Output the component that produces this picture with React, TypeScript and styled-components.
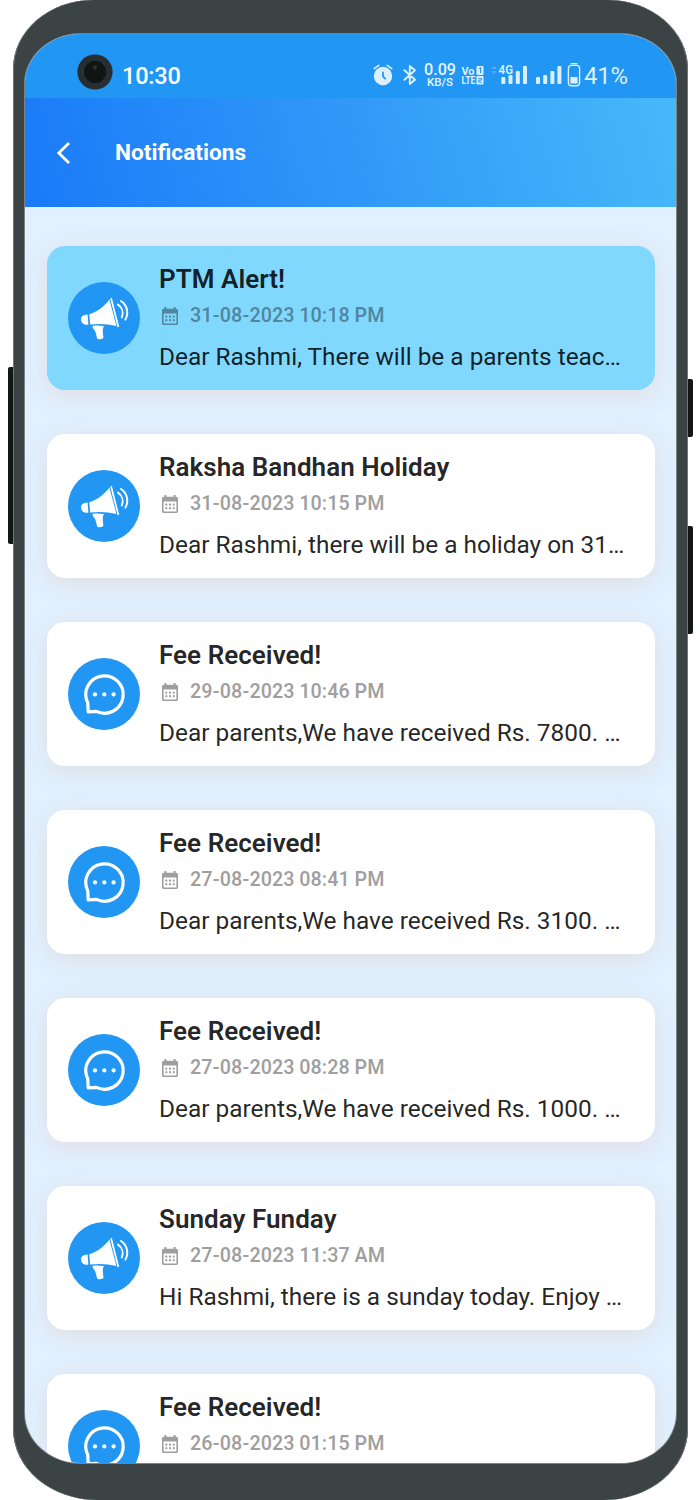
import React from "react";
import styled, { createGlobalStyle } from "styled-components";

const GlobalStyle = createGlobalStyle`
  * { box-sizing: border-box; }
  body {
    margin: 0;
    background: #ffffff;
    font-family: Roboto, "Liberation Sans", sans-serif;
  }
`;

const Stage = styled.div`
  width: 700px;
  height: 1500px;
  display: flex;
  overflow: hidden;
`;

const Rail = styled.div<{ $side: "left" | "right" }>`
  width: ${(p) => (p.$side === "left" ? 13 : 12)}px;
  flex: none;
  display: flex;
  flex-direction: column;
  align-items: ${(p) => (p.$side === "left" ? "flex-end" : "flex-start")};
`;

const SideKey = styled.div<{ $gap: number; $height: number; $side: "left" | "right" }>`
  width: 5px;
  height: ${(p) => p.$height}px;
  margin-top: ${(p) => p.$gap}px;
  background: #131716;
  border-radius: ${(p) => (p.$side === "left" ? "2px 0 0 2px" : "0 2px 2px 0")};
`;

const Phone = styled.div`
  flex: 1;
  height: 1500px;
  padding: 34px 12px 37px 12px;
  background: #3b4345;
  border-radius: 80px 80px 84px 84px / 69px 69px 71px 71px;
  box-shadow: inset 1px 0 0 0 #6f7678, inset -1px 0 0 0 #6f7678;
`;

const Screen = styled.div`
  height: 1429px;
  border-radius: 56px / 50px;
  overflow: hidden;
  background: #e1f1ff;
  box-shadow: 0 0 0 1px #7b8385;
`;

const StatusBar = styled.div`
  height: 64px;
  display: flex;
  align-items: flex-start;
  padding-left: 52px;
  background: #2196f3;
  color: #ffffff;
`;

const Camera = styled.svg`
  margin-top: 20px;
  width: 36px;
  height: 36px;
`;

const Clock = styled.div`
  width: 250px;
  margin: 27px 0 0 9px;
  font-size: 23.5px;
  line-height: 30px;
  font-weight: 500;
  letter-spacing: -0.2px;
`;

const StatusIcon = styled.svg<{ $gap?: number }>`
  flex: none;
  margin-top: 28px;
  margin-left: ${(p) => p.$gap ?? 0}px;
  color: #dcefff;
`;

const Speed = styled.div`
  width: 34px;
  margin: 29px 0 0 6px;
  text-align: center;
  font-size: 16.2px;
  line-height: 14px;
  font-weight: 500;
  color: #e8f5ff;
`;

const SpeedUnit = styled.div`
  font-size: 11.5px;
  line-height: 11px;
`;

const Percent = styled.div`
  margin: 27px 0 0 3px;
  font-size: 24px;
  line-height: 30px;
  font-weight: 450;
  letter-spacing: -0.2px;
  color: #dcefff;
`;

const AppBar = styled.header`
  height: 109px;
  display: flex;
  align-items: center;
  padding-left: 31px;
  background: linear-gradient(75deg, #1a7af8 0%, #2f97f8 48%, #47b9fa 100%);
  color: #ffffff;
`;

const PageTitle = styled.h1`
  margin: 1px 0 0 44px;
  font-size: 22.7px;
  line-height: 28px;
  font-weight: 700;
`;

const List = styled.main`
  display: flex;
  flex-direction: column;
  gap: 44px;
  padding: 39.4px 21px 0 22px;
`;

const Card = styled.article<{ $unread?: boolean }>`
  height: 144px;
  flex: none;
  display: flex;
  padding: 0 0 0 21px;
  border-radius: 18px;
  background: ${(p) => (p.$unread ? "#81d8ff" : "#ffffff")};
  box-shadow: 0 5px 24px rgba(222, 211, 211, 0.65);
`;

const Badge = styled.svg`
  flex: none;
  width: 72px;
  height: 72px;
  margin-top: 36px;
`;

const Details = styled.div`
  margin-left: 19px;
  padding-top: 17.6px;
  white-space: nowrap;
`;

const Title = styled.h2`
  margin: 0;
  font-size: 26px;
  line-height: 30px;
  font-weight: 640;
  letter-spacing: 0.04px;
  color: rgba(0, 0, 0, 0.87);
`;

const DateLine = styled.div`
  display: flex;
  align-items: center;
  gap: 12px;
  height: 28px;
  margin-top: 8px;
  padding-left: 3px;
  font-size: 19.7px;
  font-weight: 600;
  color: rgba(0, 0, 0, 0.38);
`;

const Message = styled.p`
  margin: 11px 0 0;
  font-size: 24.4px;
  line-height: 32px;
  color: rgba(0, 0, 0, 0.87);
`;

type Kind = "announcement" | "chat";

const items: { kind: Kind; title: string; date: string; text?: string; unread?: boolean }[] = [
  { kind: "announcement", title: "PTM Alert!", date: "31-08-2023 10:18 PM", text: "Dear Rashmi, There will be a parents teac…", unread: true },
  { kind: "announcement", title: "Raksha Bandhan Holiday", date: "31-08-2023 10:15 PM", text: "Dear Rashmi, there will be a holiday on 31…" },
  { kind: "chat", title: "Fee Received!", date: "29-08-2023 10:46 PM", text: "Dear parents,We have received Rs. 7800. …" },
  { kind: "chat", title: "Fee Received!", date: "27-08-2023 08:41 PM", text: "Dear parents,We have received Rs. 3100. …" },
  { kind: "chat", title: "Fee Received!", date: "27-08-2023 08:28 PM", text: "Dear parents,We have received Rs. 1000. …" },
  { kind: "announcement", title: "Sunday Funday", date: "27-08-2023 11:37 AM", text: "Hi Rashmi, there is a sunday today. Enjoy …" },
  { kind: "chat", title: "Fee Received!", date: "26-08-2023 01:15 PM" },
];

const KindBadge = ({ kind }: { kind: Kind }) => (
  <Badge viewBox="0 0 72 72">
    <circle cx="36" cy="36" r="36" fill="#2196f3" />
    {kind === "announcement" ? (
      <g fill="#ffffff">
        <path d="M19.6 32.6 L20.4 42.6 C16.6 43.4 14.2 42 13.2 38.8 C12.4 35.6 14 33 19.6 32.6Z" />
        <path d="M21.3 32.3 C29 30 36 25 41.4 17.6 L48.4 44 C40 41.8 31 41.4 22.2 42.5Z" />
        <path d="M42.2 16.4 L43.9 16 L51.2 44.8 L49.5 45.2Z" />
        <path d="M25 43.8 C29 43.3 32 43.4 36 44 C34 47 35 51 35.4 55 C35.5 56.2 34.6 56.6 33.4 56.9 L31.2 57.2 C29.8 57.3 29.2 56.6 28.9 55.4 C28 51.6 27.2 48.2 25.2 46.6 C24.4 45.8 24.4 44.4 25 43.8Z" />
        <path d="M50 22.6 C54.2 25.4 55.8 30.4 53.8 35.4" fill="none" stroke="#ffffff" strokeWidth="1.9" strokeLinecap="round" />
        <path d="M53 19 C59.2 23.2 61 31 57.4 37.6" fill="none" stroke="#ffffff" strokeWidth="2" strokeLinecap="round" />
      </g>
    ) : (
      <g>
        <path d="M19.8 45 A18.7 18.7 0 1 1 28.4 53.4 L20.2 53.9 Z" fill="none" stroke="#ffffff" strokeWidth="3.2" strokeLinejoin="round" />
        <circle cx="27" cy="36.4" r="2.1" fill="#ffffff" />
        <circle cx="36.3" cy="36.4" r="2.1" fill="#ffffff" />
        <circle cx="45.6" cy="36.4" r="2.1" fill="#ffffff" />
      </g>
    )}
  </Badge>
);

const CalendarIcon = () => (
  <svg width="16" height="18" viewBox="0 0 16 18" fill="currentColor">
    <path
      fillRule="evenodd"
      d="M1.8 1.8H2.4V0H4.4V1.8H11.6V0H13.6V1.8H14.2C15.2 1.8 16 2.6 16 3.6V16.2C16 17.2 15.2 18 14.2 18H1.8C.8 18 0 17.2 0 16.2V3.6C0 2.6.8 1.8 1.8 1.8ZM1.6 6.4V15.9C1.6 16.2 1.8 16.4 2.1 16.4H13.9C14.2 16.4 14.4 16.2 14.4 15.9V6.4Z"
    />
    {[8.6, 12.2].map((y) =>
      [3.3, 7, 10.7].map((x) => <rect key={`${x}-${y}`} x={x} y={y} width="2" height="2" />)
    )}
  </svg>
);

export default function App() {
  return (
    <>
      <GlobalStyle />
      <Stage>
        <Rail $side="left">
          <SideKey $side="left" $gap={367} $height={177} />
        </Rail>
        <Phone>
          <Screen>
            <StatusBar>
              <Camera viewBox="0 0 36 36">
                <circle cx="18" cy="18" r="17.6" fill="#272e31" />
                <circle cx="18" cy="18" r="11" fill="#0f1415" />
                <circle cx="18" cy="13.5" r="2" fill="#2d3335" />
              </Camera>
              <Clock>10:30</Clock>
              <StatusIcon $gap={1} width="20" height="26" viewBox="0 0 20 26">
                <circle cx="10" cy="14" r="9.2" fill="currentColor" />
                <path d="M1.2 6.6 L5.8 3.4 M18.8 6.6 L14.2 3.4" stroke="currentColor" strokeWidth="1.7" fill="none" strokeLinecap="round" />
                <path d="M10 10.5 V14.4 L12.2 16.6" stroke="#2196f3" strokeWidth="1.8" fill="none" strokeLinecap="round" />
              </StatusIcon>
              <StatusIcon $gap={10} width="14" height="26" viewBox="0 0 14 26">
                <path d="M1.4 8.2 L12 17.8 L6.8 22 V4 L12 8.2 L1.4 17.8" stroke="currentColor" strokeWidth="1.9" fill="none" strokeLinejoin="round" strokeLinecap="round" />
              </StatusIcon>
              <Speed>
                0.09
                <SpeedUnit>KB/S</SpeedUnit>
              </Speed>
              <StatusIcon $gap={4} width="24" height="26" viewBox="0 0 24 26" fill="currentColor" fontWeight="700" fontSize="11.5">
                <text x="0.5" y="12.6" textLength="13" lengthAdjust="spacingAndGlyphs">Vo</text>
                <text x="0.5" y="22.4" textLength="14" lengthAdjust="spacingAndGlyphs">LTE</text>
                <rect x="15.5" y="4" width="7" height="9" rx="1" />
                <rect x="15.5" y="14" width="7" height="8.4" rx="1" />
                <path d="M18.2 6.6 L19.6 6 V11" stroke="#2196f3" strokeWidth="1.2" fill="none" />
                <path d="M17.4 16.4 H20.6 V18.2 H17.6 V20.2 H20.8" stroke="#2196f3" strokeWidth="0.9" fill="none" />
              </StatusIcon>
              <StatusIcon $gap={5} width="38" height="26" viewBox="0 0 38 26" fill="currentColor">
                <path d="M1.4 7 L4 4 L6.6 7Z M1.4 9 L4 12 L6.6 9Z" fill="#58b0f7" />
                <rect x="11.3" y="15" width="4" height="7" rx="1" />
                <rect x="18.5" y="13" width="4" height="9" rx="1" />
                <rect x="25.8" y="9" width="4" height="13" rx="1" />
                <rect x="33" y="4" width="4" height="18" rx="1" />
                <text x="8.6" y="11.8" fontSize="12" fontWeight="600" textLength="14.4" lengthAdjust="spacingAndGlyphs">4G</text>
              </StatusIcon>
              <StatusIcon $gap={7} width="28" height="26" viewBox="0 0 28 26" fill="currentColor">
                <rect x="1" y="15" width="4" height="7" rx="1" />
                <rect x="8.2" y="13" width="4" height="9" rx="1" />
                <rect x="15.4" y="9" width="4" height="13" rx="1" />
                <rect x="22.4" y="4" width="4" height="18" rx="1" />
              </StatusIcon>
              <StatusIcon $gap={4} width="14" height="26" viewBox="0 0 14 26">
                <rect x="1.4" y="3.4" width="11.2" height="20.4" rx="3" fill="none" stroke="currentColor" strokeWidth="1.4" />
                <rect x="3.6" y="1" width="6.8" height="1.4" fill="currentColor" />
                <rect x="3.4" y="15" width="7.2" height="6.6" rx="0.6" fill="currentColor" />
              </StatusIcon>
              <Percent>41%</Percent>
            </StatusBar>
            <AppBar>
              <svg width="15" height="24" viewBox="0 0 15 24">
                <path d="M13 2 L2.8 12 L13 22" fill="none" stroke="#ffffff" strokeWidth="2.8" />
              </svg>
              <PageTitle>Notifications</PageTitle>
            </AppBar>
            <List>
              {items.map((item, i) => (
                <Card key={i} $unread={item.unread}>
                  <KindBadge kind={item.kind} />
                  <Details>
                    <Title>{item.title}</Title>
                    <DateLine>
                      <CalendarIcon />
                      <span>{item.date}</span>
                    </DateLine>
                    {item.text && <Message>{item.text}</Message>}
                  </Details>
                </Card>
              ))}
            </List>
          </Screen>
        </Phone>
        <Rail $side="right">
          <SideKey $side="right" $gap={379} $height={58} />
          <SideKey $side="right" $gap={89} $height={108} />
        </Rail>
      </Stage>
    </>
  );
}
